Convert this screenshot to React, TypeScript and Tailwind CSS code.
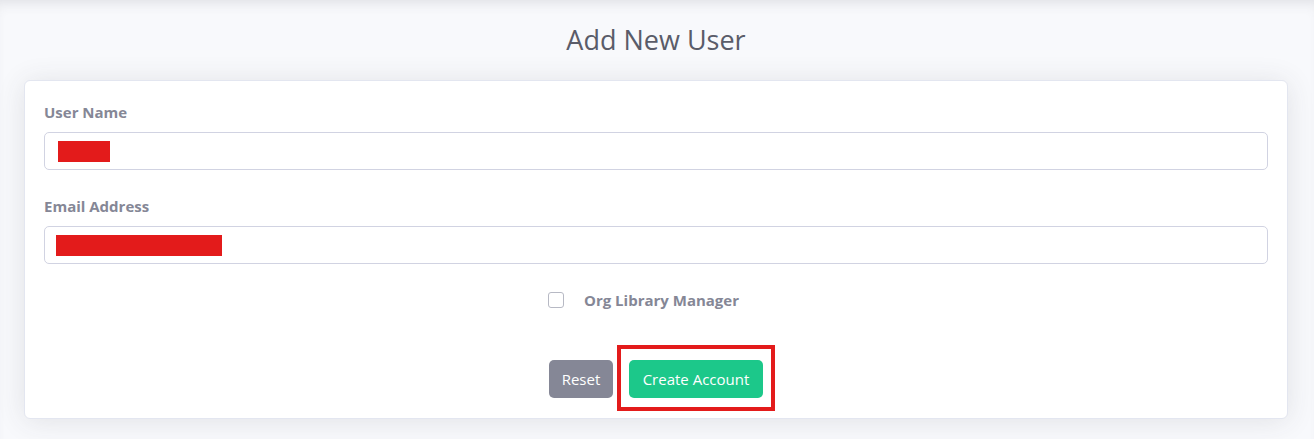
import React from "react";

const labelFont = { fontFamily: '"Open Sans", "Noto Sans", sans-serif' };

export default function App() {
  return (
    <div
      className="min-h-[439px] bg-[#f8f9fc] pl-[24px] pr-[26px] pb-[20px] shadow-[inset_0_10px_14px_-8px_rgba(58,59,69,0.14)]"
      style={{ fontFamily: '"Open Sans", "Noto Sans", sans-serif' }}
    >
      <div className="flex h-[80px] items-center justify-center">
        <h1 className="text-[27px] font-normal leading-none text-[#5a5c69] -mt-[2px]">Add New User</h1>
      </div>
      <div className="rounded-[6px] border border-[#e3e6f0] bg-white px-[19px] pb-[20px] pt-[19px] shadow-[0_2px_28px_0_rgba(58,59,69,0.12)]">
        <label className="mb-[8px] block text-[15px] font-bold leading-[24px] text-[#858796]" style={labelFont}>
          User Name
        </label>
        <div className="flex h-[38px] items-center rounded-[5px] border border-[#d1d3e2] bg-white pl-[13px]">
          <span className="h-[21px] w-[52px] bg-[#e31b1b]" />
        </div>
        <label className="mb-[8px] mt-[24px] block text-[15px] font-bold leading-[24px] text-[#858796]" style={labelFont}>
          Email Address
        </label>
        <div className="flex h-[38px] items-center rounded-[5px] border border-[#d1d3e2] bg-white pl-[11px]">
          <span className="h-[21px] w-[166px] bg-[#e31b1b]" />
        </div>
        <div className="mt-[24px] flex h-[24px] items-center justify-center pr-[25px]">
          <span className="h-[16px] w-[16px] rounded-[3px] border border-[#b7b9c4] bg-white" />
          <span className="ml-[20px] text-[15px] font-bold text-[#858796]" style={labelFont}>
            Org Library Manager
          </span>
        </div>
        <div className="mt-[48px] flex items-center justify-center gap-[16px]">
          <button className="h-[38px] w-[64px] rounded-[5px] bg-[#858796] text-[15px] text-white">Reset</button>
          <div className="relative">
            <button className="h-[38px] w-[134px] rounded-[5px] bg-[#1cc88a] text-[15px] text-white">Create Account</button>
            <span className="pointer-events-none absolute -left-[12px] -right-[12px] -top-[15px] -bottom-[13px] border-[4px] border-[#e31b1b]" />
          </div>
        </div>
      </div>
    </div>
  );
}
